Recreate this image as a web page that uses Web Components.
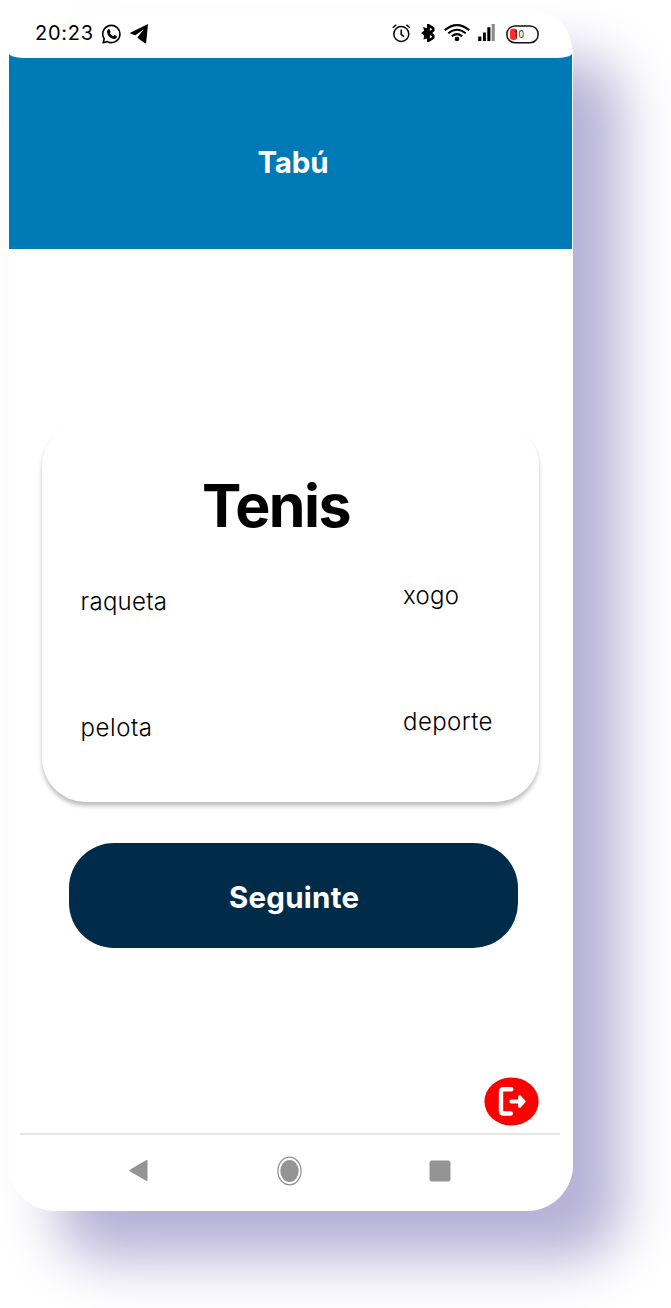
<!DOCTYPE html>
<html lang="gl">
<head>
<meta charset="utf-8">
<title>Tabú</title>
<style>
body{margin:0;background:#fff;font-family:Inter,Lato,"Open Sans",sans-serif;width:671px;height:1308px;overflow:hidden}
</style>
</head>
<body>
<game-phone></game-phone>
<script>
const define = (name, html, ready) => customElements.define(name, class extends HTMLElement {
  connectedCallback() {
    if (this.shadowRoot) return;
    const t = document.createElement('template');
    t.innerHTML = html;
    this.attachShadow({mode: 'open'}).append(t.content.cloneNode(true));
    if (ready) ready(this);
  }
});

/* One line of text, tracked so that it fills the width given in its attribute. */
define('fit-text', `<style>
:host{display:block;line-height:1;white-space:nowrap}
span{display:inline-block;vertical-align:top}
</style><span><slot></slot></span>`, el => {
  const s = el.shadowRoot.querySelector('span');
  const w = +el.getAttribute('width');
  const n = s.firstChild.assignedNodes({flatten: true}).map(x => x.textContent).join('').trim().length;
  const d = (w - s.getBoundingClientRect().width) / (n - 1);
  s.style.letterSpacing = d + 'px';
  s.style.marginRight = -d + 'px';
});

define('status-bar', `<style>
:host{display:block;height:48px;background:#fff;border-radius:40px 40px 14px 14px / 40px 40px 5px 5px}
div{display:flex;align-items:flex-start;padding:14px 31px 0 26px}
fit-text{font:400 20px/1 Inter,sans-serif;margin-top:-1px;width:57px;line-height:1}
svg{display:block;flex:none}
</style><div>
<fit-text width="58">20:23</fit-text>
<svg style="margin-left:9.5px" width="20" height="20" viewBox="0 0 20 20"><path d="M2.2 14.8A8.6 8.6 0 1 1 5.3 17.6L1.2 18.8Z" fill="none" stroke="#000" stroke-width="1.6" stroke-linejoin="round"/><path d="M5.3 6.5Q6.4 4.3 7.4 5.3L8.6 7.6Q8.5 8.3 7.9 9.2Q9.2 11.3 11.3 12.2L12.5 11.1Q14.9 12 15 12.7Q14.3 15.3 12 15Q6.2 14 5 8.2Q4.9 7.2 5.3 6.5Z"/></svg>
<svg style="margin-left:8px" width="19" height="20" viewBox="0 0 19 20"><path d="M18 0L16.2 18.6Q16 19.8 15 19.2L10 15.8L7.4 13.4L13.8 5.2L5.4 11.3L.7 9.7Q-.2 9.2.8 8.5Z"/></svg>
<svg style="margin-left:243.5px" width="19" height="19" viewBox="0 0 19 19" fill="none" stroke="#000" stroke-width="1.5"><circle cx="9.3" cy="10" r="7.5"/><path d="M9.2 5.5V10.3L12 12.6M.8 3.7L4.2.7M14.4.7L17.8 3.7"/></svg>
<svg style="margin-left:9.5px" width="15" height="18" viewBox="0 0 15 18"><path d="M6 0H8L13.5 3.6V7L11.3 8.9L13.5 11V14.4L8 18H6V14.4L2.4 15.6L3.2 11.7L.2 8.9L3.2 6.6L2 3L6 4.2Z"/><path d="M8.9 3.8L11.3 5.2L8.9 6.9ZM8.9 11.1L11.3 12.8L8.9 14.6Z" fill="#fff"/></svg>
<svg style="margin-left:8.5px" width="26" height="18" viewBox="0 0 26 18" fill="none" stroke="#000" stroke-width="2.1"><path d="M.8 6.1Q13-3.9 25.2 6.1M4.3 9.3Q13 2.2 21.7 9.3M7.8 12.2Q13 8.1 18.2 12.2"/><circle cx="13" cy="15" r="2.3" fill="#000" stroke="none"/></svg>
<svg style="margin-left:8px" width="17" height="17" viewBox="0 0 17 17"><path d="M.2 12.6H3.4V17H.2ZM5 8.4H7.9V17H5ZM9.3 3.2H12.4V17H9.3Z"/><path d="M13.6 0H16.8V17H13.6Z" fill="#8c8c8c"/></svg>
<svg style="margin:1px 0 0 11px" width="34" height="19" viewBox="0 0 34 19"><rect x=".9" y=".9" width="31.2" height="16.8" rx="8" fill="none" stroke="#111" stroke-width="1.5"/><rect x="4" y="3.5" width="7.2" height="11.5" rx="3.3" fill="#ff2b2b"/><text x="7" y="13" font-family="Open Sans,sans-serif" font-weight="400" font-size="10.5" textLength="11" lengthAdjust="spacingAndGlyphs" fill="#222">10</text></svg>
</div>`);

define('title-bar', `<style>
:host{display:block;background:#007ab6;height:191px;margin-right:1.5px}
.t{color:#fff;font-weight:650;font-size:29.5px;padding:90px 0 0 248.5px}
</style><div class="t"><fit-text width="71"><slot></slot></fit-text></div>`);

define('taboo-card', `<style>
:host{display:block;box-sizing:border-box;width:496.5px;height:380px;margin:173px 0 0 33px;border-radius:44px;background:#fff;box-shadow:0 4px 4px rgba(0,0,0,.25);padding-top:54px}
.h{font-weight:650;font-size:59px;padding-left:160px}
.g{display:grid;grid-template-columns:322.5px auto;font-size:24px;font-weight:300;margin-top:49px;padding-left:38.5px}
.c{display:grid;row-gap:102px;align-content:start}
.l{padding-top:6px}
</style><div class="h"><fit-text width="149.5"><slot></slot></fit-text></div>
<div class="g"><div class="c l"><fit-text width="86.5">raqueta</fit-text><fit-text width="71.5">pelota</fit-text></div>
<div class="c"><fit-text width="56">xogo</fit-text><fit-text width="89.5">deporte</fit-text></div></div>`);

define('next-button', `<style>
:host{display:block;box-sizing:border-box;width:448.5px;height:105px;margin:40.5px 0 0 60px;border-radius:45px;background:#002c49;color:#fff;font-weight:650;font-size:29.5px;padding:40px 0 0 160px}
</style><fit-text width="130"><slot></slot></fit-text>`);

define('exit-button', `<style>
:host{display:block;margin:129px 0 0 475px;width:55px;height:49px}
svg{display:block}
</style><svg width="55" height="49" viewBox="0 0 55 49"><ellipse cx="27.5" cy="24.5" rx="27.1" ry="24" fill="red"/><path d="M27.3 12.3H19.5Q17 12.3 17 14.8V34Q17 36.5 19.5 36.5H26.8" fill="none" stroke="#fff" stroke-width="4.4" stroke-linecap="round"/><path d="M27.5 24.5H38" stroke="#fff" stroke-width="4.2" stroke-linecap="round"/><path d="M35.7 19.7L40 24.5L35.7 29.3Z" fill="#fff" stroke="#fff" stroke-width="3.2" stroke-linejoin="round"/></svg>`);

define('nav-bar', `<style>
:host{display:block;margin:7px 13px 0 11px;border-top:2px solid #e5e5e5}
div{display:flex;align-items:center;padding:21px 0 0 108.5px}
svg{display:block}
</style><div>
<svg width="19" height="23" viewBox="0 0 19 23"><path d="M1.3 11.5L17.5 2V21Z" fill="#949494" stroke="#949494" stroke-width="2" stroke-linejoin="round"/></svg>
<svg style="margin-left:129.5px" width="25" height="30" viewBox="0 0 25 30"><ellipse cx="12.5" cy="15" rx="11.6" ry="13.8" fill="none" stroke="#949494" stroke-width="1.3"/><ellipse cx="12.5" cy="15" rx="9.2" ry="11" fill="#949494"/></svg>
<svg style="margin-left:126.5px" width="22" height="22" viewBox="0 0 22 22"><rect x=".5" y=".5" width="21" height="21" rx="2.5" fill="#949494"/></svg>
</div>`);

define('game-phone', `<style>
:host{display:block;padding:10px 0 0 9px}
main{display:flow-root;width:564px;height:1200.5px;border-radius:46px;background:#fff;box-shadow:48px 48px 56px #b6b1d6}
.top{background:linear-gradient(#fff0 40px,#007ab6 40px);margin-right:1.5px;border-radius:46px 46px 0 0}
</style><main>
<div class="top"><status-bar></status-bar></div>
<title-bar>Tabú</title-bar>
<taboo-card>Tenis</taboo-card>
<next-button>Seguinte</next-button>
<exit-button></exit-button>
<nav-bar></nav-bar>
</main>`);
</script>
</body>
</html>
